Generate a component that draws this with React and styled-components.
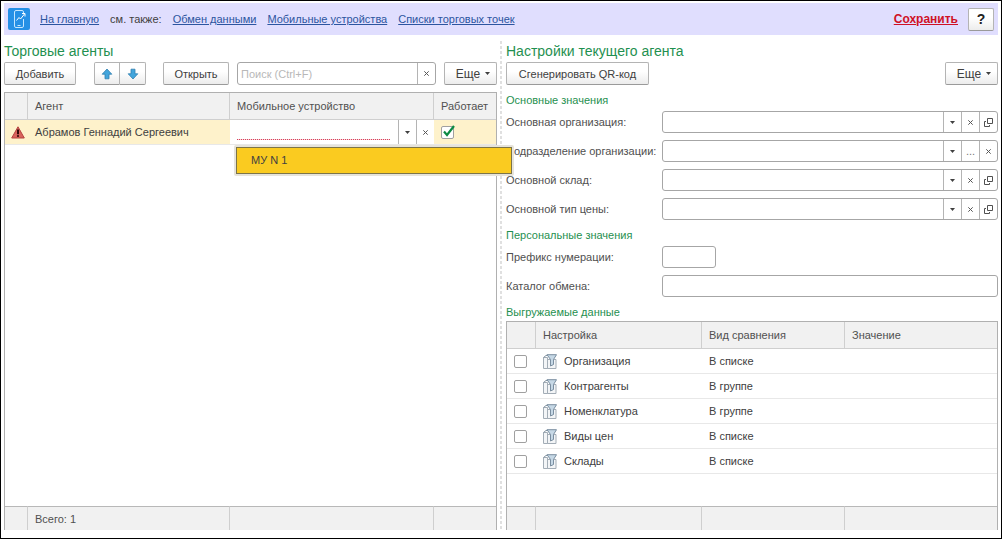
import { useState } from "react";
import styled, { createGlobalStyle } from "styled-components";

const GlobalStyle = createGlobalStyle`
    * {
        box-sizing: border-box;
    }
    body {
        margin: 0;
        background: #fff;
    }
    body, button, input {
        font-family: "Liberation Sans", Arial, sans-serif;
        font-size: 11px;
        color: #404040;
    }
`;

const Page = styled.div`
    display: flex;
    flex-direction: column;
    min-height: 100vh;
    padding: 2px 3px 8px;
    border: 1px solid #000;
`;
const Header = styled.header`
    display: flex;
    align-items: center;
    gap: 10px;
    height: 32px;
    padding: 0 4px;
    background: #e0defe;
`;
const Nav = styled.nav`
    display: flex;
    flex: 1;
    align-items: center;
    gap: 11px;
`;
const Link = styled.a`
    color: #2c55a0;
    text-decoration: underline;
`;
const SaveLink = styled.a`
    color: #cf1126;
    font-size: 12px;
    font-weight: bold;
`;
const Columns = styled.main`
    display: grid;
    flex: 1;
    grid-template-columns: minmax(0, 1fr) 8px minmax(0, 1fr);
    padding-top: 6px;
`;
const Panel = styled.section`
    display: flex;
    flex-direction: column;
    padding-left: ${(p) => p.$indent || 0}px;
`;
const Divider = styled.div`
    width: 2px;
    margin-left: 3px;
    background: repeating-linear-gradient(#e0e0e0 0 3px, #fff 3px 5px);
`;
const Title = styled.h1`
    margin: 0;
    font-size: 14px;
    font-weight: normal;
    line-height: 21px;
    color: #1f9050;
`;
const GroupTitle = styled.h2`
    margin: 7px 0 0;
    font-size: 11px;
    font-weight: normal;
    line-height: 17px;
    color: #1f9050;
`;
const Toolbar = styled.div`
    display: flex;
    justify-content: ${(p) => (p.$spread ? "space-between" : "flex-start")};
    gap: 8px;
    height: 23px;
`;
const Button = styled.button`
    display: flex;
    flex: none;
    align-items: center;
    justify-content: center;
    gap: 5px;
    width: ${(p) => p.$width}px;
    height: 23px;
    padding: 0;
    border: 1px solid #b4b4b4;
    border-bottom-color: #9a9a9a;
    border-radius: 2px;
    background: linear-gradient(#fff 40%, #ececec);
    cursor: pointer;
`;
const MoreButton = styled(Button)`
    width: 53px;
    padding-left: 5px;
    font-size: 12px;
`;
const HelpButton = styled(Button)`
    font-size: 14px;
    font-weight: bold;
    color: #222;
`;
const ButtonPair = styled.div`
    display: flex;
    margin: 0 9px 0 10px;
    button:first-child {
        border-radius: 2px 0 0 2px;
    }
    button:last-child {
        border-left: 0;
        border-radius: 0 2px 2px 0;
    }
`;
const InputBox = styled.div`
    display: flex;
    flex: ${(p) => (p.$width ? "none" : 1)};
    width: ${(p) => (p.$width ? p.$width + "px" : "auto")};
    min-width: 0;
    height: ${(p) => p.$height || 22}px;
    border: 1px solid #a6a6a6;
    border-radius: 3px;
    background: #fff;
`;
const TextInput = styled.input`
    flex: 1;
    min-width: 0;
    padding: 0 3px;
    border: 0;
    outline: 0;
    background: transparent;
    &::placeholder {
        color: #b8b8b8;
        opacity: 1;
    }
`;
const InnerButton = styled.button`
    display: flex;
    flex: none;
    align-items: center;
    justify-content: center;
    width: 18px;
    padding: 0;
    border: 0;
    border-left: 1px solid #b4b4b4;
    background: transparent;
    color: #777;
    cursor: pointer;
`;
const Fields = styled.div`
    display: flex;
    flex-direction: column;
    gap: 7px;
    padding-top: 2px;
`;
const Field = styled.div`
    display: flex;
    align-items: center;
    label {
        width: 156px;
        color: #505050;
        white-space: nowrap;
    }
`;
const TableFrame = styled.div`
    display: flex;
    flex: 1;
    margin-top: ${(p) => p.$gap || 0}px;
    border: 1px solid #b0b0b0;
    border-bottom: 0;
`;
const Table = styled.table`
    width: 100%;
    table-layout: fixed;
    border-spacing: 0;
    th, td {
        padding: 0 0 0 7px;
        font-weight: normal;
        text-align: left;
        white-space: nowrap;
    }
    thead th {
        height: 27px;
        border-bottom: 1px solid #cfcfcf;
        background: #f1f1f1;
        color: #505050;
    }
    tfoot td {
        height: 24px;
        border-top: 1px solid #b8b8b8;
        background: #f1f1f1;
        color: #505050;
    }
    thead th:not(:last-child), tfoot td:not(:last-child) {
        border-right: 1px solid #cfcfcf;
    }
`;
const Col = styled.col`
    width: ${(p) => (p.$width ? p.$width + "px" : "auto")};
`;
const Row = styled.tr`
    td {
        height: 25px;
        border-bottom: 1px solid #e8e8e8;
        background: ${(p) => (p.$selected ? "#fef2cb" : "#fff")};
    }
`;
const IconCell = styled.td`
    && {
        padding: 0 0 0 6px;
    }
    svg {
        display: block;
    }
`;
const EditCell = styled.td`
    && {
        position: relative;
        padding: 0;
        background: #fff;
    }
`;
const Editor = styled.div`
    display: flex;
    height: 24px;
    padding-left: 7px;
`;
const EditorInput = styled(TextInput)`
    height: 20px;
    margin-right: 8px;
    background: repeating-linear-gradient(90deg, #d8405a 0 1px, #f6d5da 1px 2px) bottom / 100% 1px no-repeat;
`;
const Popup = styled.ul`
    position: absolute;
    z-index: 2;
    top: 25px;
    left: 4px;
    width: 280px;
    margin: 0;
    padding: 0;
    border: 2px solid #e6e3da;
    border-radius: 2px;
    list-style: none;
`;
const PopupItem = styled.li`
    height: 27px;
    padding-left: 14px;
    border: 1px solid #7c7448;
    background: #facb20;
    line-height: 25px;
`;
const CheckLabel = styled.label`
    display: inline-grid;
    vertical-align: middle;
    input, svg {
        grid-area: 1 / 1;
    }
    svg {
        visibility: hidden;
        pointer-events: none;
    }
    input:checked + svg {
        visibility: visible;
    }
`;
const CheckBox = styled.input`
    width: 13px;
    height: 13px;
    margin: 0;
    border: 1px solid #a0a0a0;
    border-radius: 2px;
    background: #fff;
    appearance: none;
`;
const Setting = styled.div`
    display: flex;
    align-items: center;
    gap: 7px;
`;

const Logo = () => (
    <svg width="22" height="22" viewBox="0 0 22 22" fill="none">
        <rect width="22" height="22" rx="2" fill="#2590e6" />
        <path d="M15.500 5V4A1.500 1.500 0 0 0 14 2.500H8A1.500 1.500 0 0 0 6.500 4v14A1.500 1.500 0 0 0 8 19.500h6a1.500 1.500 0 0 0 1.500-1.500v-7M9.500 17.500h3" stroke="#c4e6ff" />
        <path d="M8.500 12.500l2.500-3 1.500 1.500 4-5M14 5.500h3v3" stroke="#fff" />
    </svg>
);
const Arrow = ({ down }) => (
    <svg width="12" height="12" viewBox="0 0 12 12">
        <path
            d={down ? "M6 11 1.200 5.800H4V1.200h4v4.600h2.800z" : "M6 1 1.200 6.200H4v4.600h4V6.200h2.800z"}
            fill="#42a5dc"
            stroke="#2e7fb0"
            strokeWidth=".8"
            strokeLinejoin="round"
        />
    </svg>
);
const Caret = () => (
    <svg width="5" height="3" viewBox="0 0 5 3">
        <path d="M0 0h5L2.500 3z" fill="#404040" />
    </svg>
);
const Cross = () => (
    <svg width="5" height="5" viewBox="0 0 5 5">
        <path d="M.3.3l4.400 4.400M4.700.3.3 4.700" stroke="#555" />
    </svg>
);
const OpenIcon = () => (
    <svg width="9" height="9" viewBox="0 0 9 9" fill="none" stroke="#505050">
        <path d="M3.500.5h5v5h-5zM2 3.500H.5v5h5V7" />
    </svg>
);
const Warning = () => (
    <svg width="14" height="13" viewBox="0 0 14 13">
        <path d="M7 .8 13.300 12H.7z" fill="#d9635c" stroke="#b5423f" strokeLinejoin="round" />
        <path d="M7 3.500v4.700" stroke="#33090a" strokeWidth="2" />
        <circle cx="7" cy="10" r="1.100" fill="#33090a" />
    </svg>
);
const Check = () => (
    <svg width="13" height="13" viewBox="0 0 13 13" overflow="visible">
        <path d="M3 5.500 6 9l7-9" fill="none" stroke="#0d8a43" strokeWidth="2.200" />
    </svg>
);
const FilterIcon = () => (
    <svg width="14" height="15" viewBox="0 0 14 15">
        <path d="M.5 3.500h4v11h-4zM4.500 5.500h8.500v9H4.500z" fill="#f3f5f7" stroke="#a3adb6" />
        <path d="M.5 3.500 3 1.500h3" fill="none" stroke="#8494a2" />
        <path d="M4 .7h9.500L10.500 5.500V10.500L7.500 12V5.500z" fill="#c6d8e6" stroke="#7a8ea0" strokeLinejoin="round" />
    </svg>
);

const Tick = ({ name, initial = false }) => {
    const [on, setOn] = useState(initial);
    return (
        <CheckLabel>
            <CheckBox type="checkbox" aria-label={name} checked={on} onChange={() => setOn(!on)} />
            <Check />
        </CheckLabel>
    );
};

const buttonKinds = {
    list: { label: "Выбрать из списка", icon: <Caret /> },
    clear: { label: "Очистить", icon: <Cross /> },
    open: { label: "Открыть", icon: <OpenIcon /> },
    more: { label: "Выбрать", icon: "..." },
};

const FormField = ({ id, label, buttons = [], width }) => (
    <Field>
        <label htmlFor={id}>{label}</label>
        <InputBox $width={width}>
            <TextInput id={id} type="text" />
            {buttons.map((kind) => (
                <InnerButton key={kind} type="button" aria-label={buttonKinds[kind].label}>
                    {buttonKinds[kind].icon}
                </InnerButton>
            ))}
        </InputBox>
    </Field>
);

const settings = [
    { name: "Организация", compare: "В списке" },
    { name: "Контрагенты", compare: "В группе" },
    { name: "Номенклатура", compare: "В группе" },
    { name: "Виды цен", compare: "В списке" },
    { name: "Склады", compare: "В списке" },
];

const AgentsPanel = () => (
    <Panel>
        <Title>Торговые агенты</Title>
        <Toolbar>
            <Button $width={72}>Добавить</Button>
            <ButtonPair>
                <Button $width={26} aria-label="Вверх"><Arrow /></Button>
                <Button $width={26} aria-label="Вниз"><Arrow down /></Button>
            </ButtonPair>
            <Button $width={66}>Открыть</Button>
            <InputBox $height={23}>
                <TextInput type="text" aria-label="Поиск" placeholder="Поиск (Ctrl+F)" />
                <InnerButton type="button" aria-label="Очистить"><Cross /></InnerButton>
            </InputBox>
            <MoreButton>Еще <Caret /></MoreButton>
        </Toolbar>
        <TableFrame $gap={7}>
            <Table>
                <colgroup>
                    <Col $width={23} />
                    <Col />
                    <Col $width={204} />
                    <Col $width={62} />
                </colgroup>
                <thead>
                    <tr>
                        <th></th>
                        <th>Агент</th>
                        <th>Мобильное устройство</th>
                        <th>Работает</th>
                    </tr>
                </thead>
                <tbody>
                    <Row $selected>
                        <IconCell><Warning /></IconCell>
                        <td>Абрамов Геннадий Сергеевич</td>
                        <EditCell>
                            <Editor>
                                <EditorInput type="text" aria-label="Мобильное устройство" />
                                <InnerButton type="button" aria-label="Выбрать из списка"><Caret /></InnerButton>
                                <InnerButton type="button" aria-label="Очистить"><Cross /></InnerButton>
                            </Editor>
                            <Popup role="listbox" aria-label="Мобильное устройство">
                                <PopupItem role="option" aria-selected="true">МУ N 1</PopupItem>
                            </Popup>
                        </EditCell>
                        <td><Tick name="Работает" initial /></td>
                    </Row>
                    <tr><td colSpan={4}></td></tr>
                </tbody>
                <tfoot>
                    <tr>
                        <td></td>
                        <td>Всего: 1</td>
                        <td></td>
                        <td></td>
                    </tr>
                </tfoot>
            </Table>
        </TableFrame>
    </Panel>
);

const SettingsPanel = () => (
    <Panel $indent={1}>
        <Title as="h2">Настройки текущего агента</Title>
        <Toolbar $spread>
            <Button $width={143}>Сгенерировать QR-код</Button>
            <MoreButton>Еще <Caret /></MoreButton>
        </Toolbar>
        <GroupTitle>Основные значения</GroupTitle>
        <Fields>
            <FormField id="org" label="Основная организация:" buttons={["list", "clear", "open"]} />
            <FormField id="dept" label="Подразделение организации:" buttons={["list", "more", "clear"]} />
            <FormField id="store" label="Основной склад:" buttons={["list", "clear", "open"]} />
            <FormField id="price" label="Основной тип цены:" buttons={["list", "clear", "open"]} />
        </Fields>
        <GroupTitle>Персональные значения</GroupTitle>
        <Fields>
            <FormField id="prefix" label="Префикс нумерации:" width={54} />
            <FormField id="catalog" label="Каталог обмена:" />
        </Fields>
        <GroupTitle>Выгружаемые данные</GroupTitle>
        <TableFrame>
            <Table>
                <colgroup>
                    <Col $width={29} />
                    <Col $width={166} />
                    <Col $width={143} />
                    <Col />
                </colgroup>
                <thead>
                    <tr>
                        <th></th>
                        <th>Настройка</th>
                        <th>Вид сравнения</th>
                        <th>Значение</th>
                    </tr>
                </thead>
                <tbody>
                    {settings.map((item) => (
                        <Row key={item.name}>
                            <td><Tick name={item.name} /></td>
                            <td><Setting><FilterIcon />{item.name}</Setting></td>
                            <td>{item.compare}</td>
                            <td></td>
                        </Row>
                    ))}
                    <tr><td colSpan={4}></td></tr>
                </tbody>
                <tfoot>
                    <tr>
                        <td></td>
                        <td></td>
                        <td></td>
                        <td></td>
                    </tr>
                </tfoot>
            </Table>
        </TableFrame>
    </Panel>
);

const App = () => (
    <>
        <GlobalStyle />
        <Page>
            <Header>
                <Logo />
                <Nav>
                    <Link href="#">На главную</Link>
                    <span>см. также:</span>
                    <Link href="#">Обмен данными</Link>
                    <Link href="#">Мобильные устройства</Link>
                    <Link href="#">Списки торговых точек</Link>
                </Nav>
                <SaveLink href="#">Сохранить</SaveLink>
                <HelpButton $width={26} aria-label="Справка">?</HelpButton>
            </Header>
            <Columns>
                <AgentsPanel />
                <Divider />
                <SettingsPanel />
            </Columns>
        </Page>
    </>
);
export default App;
